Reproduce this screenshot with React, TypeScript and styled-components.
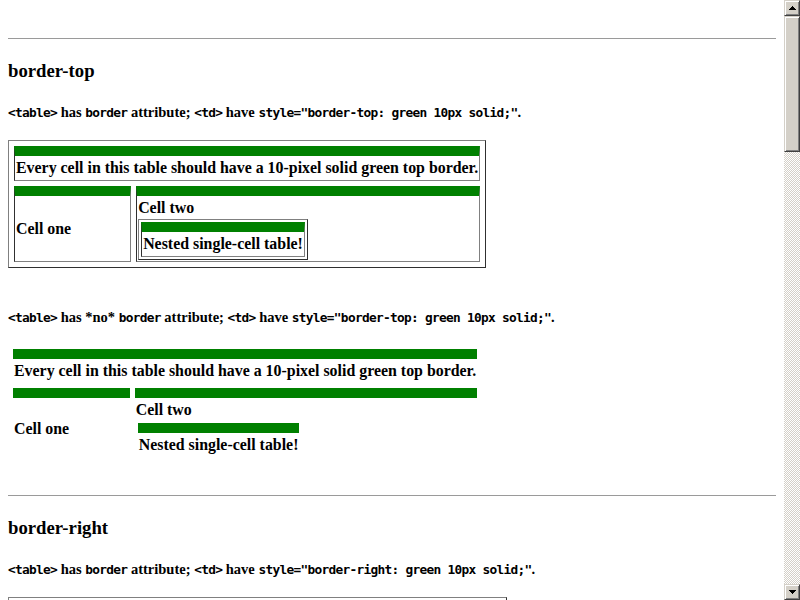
import React from "react";
import styled, { createGlobalStyle } from "styled-components";

const Global = createGlobalStyle`
  html, body { margin: 0; padding: 0; background: #fff; }
  body { font-family: "Liberation Serif", "Times New Roman", serif; color: #000; }
`;

const Viewport = styled.div`
  display: flex;
  width: 800px;
  height: 600px;
  overflow: hidden;
  background: #fff;
`;

const Page = styled.div`
  flex: 1;
  min-width: 0;
  height: 600px;
  overflow: hidden;
  box-sizing: border-box;
  padding: 8px;
  font-weight: bold;
`;

const Rule = styled.div<{ $top: number }>`
  height: 1px;
  background: #9a9a9a;
  margin: ${(p) => p.$top}px 0 21px;
`;

const Heading = styled.h3`
  font-size: 18.72px;
  line-height: 22px;
  margin: 0 0 21px;
  font-weight: bold;
`;

const Desc = styled.p<{ $after: number }>`
  font-size: 14.5px;
  line-height: 18px;
  height: 18px;
  margin: 0 0 ${(p) => p.$after}px;
  white-space: nowrap;
`;

const Code = styled.code`
  font-family: "DejaVu Sans Mono", "Liberation Mono", monospace;
  font-size: 12.8px;
  letter-spacing: -0.7px;
  font-weight: bold;
  line-height: 1;
`;

const Table = styled.table<{ $bordered: boolean; $spacing: number; $after?: number }>`
  border-collapse: separate;
  border-spacing: ${(p) => p.$spacing}px;
  border-style: solid;
  border-width: ${(p) => (p.$bordered ? "1px" : "0")};
  border-color: #808080 #303030 #303030 #808080;
  margin: 0 0 ${(p) => p.$after ?? 0}px;
`;

const Cell = styled.td<{ $bordered: boolean; $side: "top" | "right" }>`
  padding: 1px;
  font-size: 15.9px;
  line-height: 22px;
  font-weight: bold;
  vertical-align: middle;
  white-space: nowrap;
  border-style: solid;
  border-width: ${(p) => (p.$bordered ? "1px" : "0")};
  border-color: #303030 #808080 #808080 #303030;
  border-${(p) => p.$side}: 10px solid #008000;
`;

const ScrollBar = styled.div`
  width: 16px;
  height: 600px;
  flex-shrink: 0;
  display: flex;
  flex-direction: column;
  background-color: #fff;
  background-image: conic-gradient(#d4d0c8 25%, #fff 0 50%, #d4d0c8 0 75%, #fff 0);
  background-size: 2px 2px;
`;

const ScrollButton = styled.div<{ $h?: number }>`
  width: 16px;
  height: ${(p) => p.$h ?? 16}px;
  box-sizing: border-box;
  background: #d4d0c8;
  border: 1px solid;
  border-color: #d4d0c8 #404040 #404040 #d4d0c8;
  box-shadow: inset 1px 1px #fff, inset -1px -1px #808080;
  display: flex;
  align-items: center;
  justify-content: center;
`;

const Track = styled.div`
  flex: 1;
`;

const Arrow = ({ down }: { down?: boolean }) => (
  <svg width="7" height="4" viewBox="0 0 7 4" shapeRendering="crispEdges">
    <polygon points={down ? "0,0 7,0 3.5,4" : "3.5,0 7,4 0,4"} fill="#000" />
  </svg>
);

const TestTable = ({
  bordered,
  side,
  after,
}: {
  bordered: boolean;
  side: "top" | "right";
  after?: number;
}) => (
  <Table $bordered={bordered} $spacing={5} $after={after}>
    <tbody>
      <tr>
        <Cell $bordered={bordered} $side={side} colSpan={2}>
          Every cell in this table should have a 10-pixel solid green {side} border.
        </Cell>
      </tr>
      <tr>
        <Cell $bordered={bordered} $side={side}>Cell one</Cell>
        <Cell $bordered={bordered} $side={side}>
          Cell two
          <Table $bordered={bordered} $spacing={2}>
            <tbody>
              <tr>
                <Cell $bordered={bordered} $side={side}>Nested single-cell table!</Cell>
              </tr>
            </tbody>
          </Table>
        </Cell>
      </tr>
    </tbody>
  </Table>
);

export default function App() {
  return (
    <Viewport>
      <Global />
      <Page>
        <Rule $top={30} />
        <Heading>border-top</Heading>
        <Desc $after={19}>
          <Code>&lt;table&gt;</Code> has <Code>border</Code> attribute; <Code>&lt;td&gt;</Code> have{" "}
          <Code>style="border-top: green 10px solid;"</Code>.
        </Desc>
        <TestTable bordered side="top" after={40} />
        <Desc $after={18}>
          <Code>&lt;table&gt;</Code> has *no* <Code>border</Code> attribute; <Code>&lt;td&gt;</Code> have{" "}
          <Code>style="border-top: green 10px solid;"</Code>.
        </Desc>
        <TestTable bordered={false} side="top" />
        <Rule $top={30} />
        <Heading>border-right</Heading>
        <Desc $after={19}>
          <Code>&lt;table&gt;</Code> has <Code>border</Code> attribute; <Code>&lt;td&gt;</Code> have{" "}
          <Code>style="border-right: green 10px solid;"</Code>.
        </Desc>
        <TestTable bordered side="right" />
      </Page>
      <ScrollBar>
        <ScrollButton>
          <Arrow />
        </ScrollButton>
        <ScrollButton $h={136} />
        <Track />
        <ScrollButton>
          <Arrow down />
        </ScrollButton>
      </ScrollBar>
    </Viewport>
  );
}
